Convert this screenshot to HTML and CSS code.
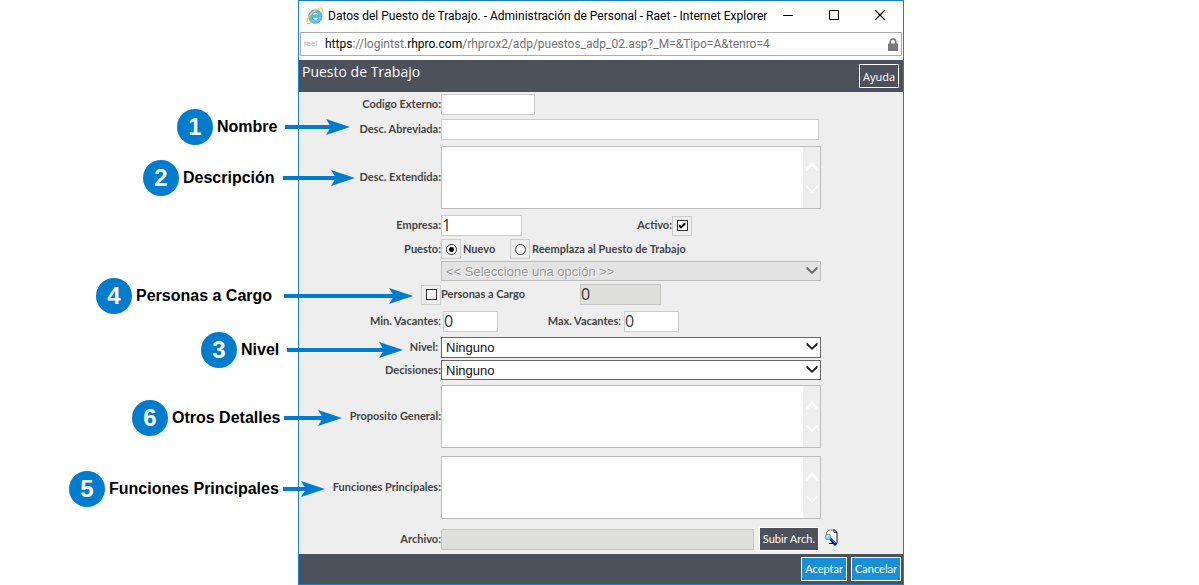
FILE: index.html
```html
<!DOCTYPE html>
<html lang="es">
<head>
<meta charset="utf-8">
<title>Puesto de Trabajo</title>
<link rel="stylesheet" href="styles.css">
</head>
<body>
<svg class="defs" aria-hidden="true">
  <symbol id="head" viewBox="0 0 24 16"><path d="M0 0 24 8 0 16 5 8z" fill="#007ccf"/></symbol>
  <symbol id="down" viewBox="0 0 12 9"><path d="M0.500 1h1L6 5.500 10.500 1h1v2L6 8 0.500 3z" fill="currentColor"/></symbol>
  <symbol id="up" viewBox="0 0 12 9"><path d="M0 9h1l5-5 5 5h1V6L6 0 0 6z" fill="currentColor"/></symbol>
</svg>
<main class="window">
  <header class="titlebar">
    <svg class="ie" viewBox="0 0 18 18" aria-hidden="true">
      <path d="M16 10.300H6.200a3.400 3.400 0 0 0 6.300 1.400h3.200A6.700 6.700 0 1 1 16 10.300zM6.300 8h6.500a3.300 3.300 0 0 0-6.500 0z" fill="#5cc4f2" stroke="#2b94d2" stroke-width=".7"/>
      <path d="M1.500 12.500C.5 15 .6 16.700 2 16.800 3.500 16.900 6 15.500 8 14M12 1.800C14.500.7 16.300.8 16.500 2.200 16.600 3.200 16.200 4.500 15.500 6" fill="none" stroke="#f0b928"/>
      <path d="M1.500 12.500C3.500 7.500 8 3.500 13 1.500" fill="none" stroke="#f6c83c" stroke-width="1.200"/>
    </svg>
    <h1 class="caption">Datos del Puesto de Trabajo. - Administración de Personal - Raet - Internet Explorer</h1>
    <button class="winbtn" aria-label="Minimizar"><svg width="12" height="12"><path d="M1 5.500h10" stroke="#000"/></svg></button>
    <button class="winbtn" aria-label="Maximizar"><svg width="12" height="12"><path d="M1.500 .5h9v9h-9z" fill="none" stroke="#000"/></svg></button>
    <button class="winbtn" aria-label="Cerrar"><svg width="12" height="12"><path d="M1 0l10 10M11 0 1 10" stroke="#000" stroke-width="1.200"/></svg></button>
  </header>
  <div class="address">
    <span class="favicon"><i class="r">r</i><i class="a">a</i><i class="e">e</i><i class="t">t</i></span>
    <span class="url"><b>https</b>://logintst.<b>rhpro.com</b>/rhprox2/adp/puestos_adp_02.asp?_M=&amp;Tipo=A&amp;tenro=4</span>
    <svg class="lock" viewBox="0 0 10 13" aria-hidden="true"><path d="M2.200 6V3.800a2.800 2.800 0 0 1 5.600 0V6" fill="none" stroke="#777" stroke-width="1.500"/><path d="M0 5.500h10V13H0z" fill="#777"/></svg>
  </div>
  <div class="toolbar"><h2 class="heading">Puesto de Trabajo</h2><button class="btn help">Ayuda</button></div>
  <form class="form">
    <div class="row"><label for="cod">Codigo Externo:</label><div class="field"><input id="cod" class="text medium" type="text"></div></div>
    <div class="row gap4"><label for="abr">Desc. Abreviada:</label><div class="field"><input id="abr" class="text long" type="text"></div></div>
    <div class="row gap6"><label for="ext">Desc. Extendida:</label><div class="field area"><textarea id="ext"></textarea><span class="scroll"><svg><use href="#up"/></svg><svg><use href="#down"/></svg></span></div></div>
    <div class="row gap6"><label for="emp">Empresa:</label><div class="field"><input id="emp" class="text short" type="text" value="1"><label class="activo" for="act">Activo:</label><span class="box"><input id="act" type="checkbox" checked></span></div></div>
    <div class="row gap3"><span class="name">Puesto:</span><div class="field"><span class="box"><input id="nue" type="radio" name="p" checked></span><label class="nuevo" for="nue">Nuevo</label><span class="box"><input id="ree" type="radio" name="p"></span><label class="after" for="ree">Reemplaza al Puesto de Trabajo</label></div></div>
    <div class="row gap2"><span></span><div class="field pick off"><select disabled aria-label="Puesto a reemplazar"><option>&lt;&lt; Seleccione una opción &gt;&gt;</option></select><svg><use href="#down"/></svg></div></div>
    <div class="row gap3"><span class="box end"><input id="per" type="checkbox"></span><div class="field"><label class="cargo" for="per">Personas a Cargo</label><input class="text short" type="text" value="0" disabled aria-label="Cantidad de personas"></div></div>
    <div class="row gap6"><label for="min">Min. Vacantes<span class="thin">:</span></label><div class="field inset"><input id="min" class="text tiny" type="text" value="0"><label class="max" for="max">Max. Vacantes<span class="thin">:</span></label><input id="max" class="text tiny" type="text" value="0"></div></div>
    <div class="row gap5"><label class="pulled" for="niv">Nivel:</label><div class="field pick"><select id="niv"><option>Ninguno</option></select><svg><use href="#down"/></svg></div></div>
    <div class="row gap2"><label for="dec">Decisiones:</label><div class="field pick low"><select id="dec"><option>Ninguno</option></select><svg><use href="#down"/></svg></div></div>
    <div class="row gap5"><label for="pro">Proposito General:</label><div class="field area"><textarea id="pro"></textarea><span class="scroll"><svg><use href="#up"/></svg><svg><use href="#down"/></svg></span></div></div>
    <div class="row gap8"><label for="fun">Funciones Principales:</label><div class="field area"><textarea id="fun"></textarea><span class="scroll"><svg><use href="#up"/></svg><svg><use href="#down"/></svg></span></div></div>
    <div class="row gap8"><label for="arc">Archivo:</label><div class="field file"><input id="arc" class="text" type="text" disabled><button type="button" class="btn">Subir Arch.</button></div>
      <button type="button" class="preview" aria-label="Ver archivo"><svg width="15" height="17" viewBox="0 0 15 17"><path d="M3 1h7l3 3v11H3z" fill="#fff"/><path d="M2.500 6V3.500L5 1h5" fill="none" stroke="#777"/><path d="M10 .5v3h3M10 .5l3 3v11H5" fill="none" stroke="#111"/><circle cx="4" cy="8" r="2.800" fill="#6fe0f2" stroke="#7199a5"/><path d="M2.500 7.500l2-1" stroke="#fff"/><path d="M6.500 10l5.500 6" stroke="#0a1d66" stroke-width="3"/><path d="M7 9.500l4.500 5" stroke="#2f9be0"/></svg></button></div>
  </form>
  <footer class="footer"><button class="btn blue">Aceptar</button><button class="btn blue">Cancelar</button></footer>
</main>
<div class="callout c1"><span class="num">1</span><span>Nombre</span><span class="shaft"></span><svg><use href="#head"/></svg></div>
<div class="callout c2"><span class="num">2</span><span>Descripción</span><span class="shaft"></span><svg><use href="#head"/></svg></div>
<div class="callout c4"><span class="num">4</span><span>Personas a Cargo</span><span class="shaft far"></span><svg><use href="#head"/></svg></div>
<div class="callout c3"><span class="num">3</span><span>Nivel</span><span class="shaft"></span><svg><use href="#head"/></svg></div>
<div class="callout c6"><span class="num">6</span><span>Otros Detalles</span><span class="shaft near"></span><svg><use href="#head"/></svg></div>
<div class="callout c5"><span class="num">5</span><span>Funciones Principales</span><span class="shaft near"></span><svg><use href="#head"/></svg></div>
</body>
</html>
```
FILE: styles.css
```css
* { box-sizing: border-box; }
body { margin: 0; background: #fff; position: relative; font-family: "Open Sans", "Noto Sans", sans-serif; }
button, input, select, textarea { font: inherit; margin: 0; }
.defs { position: absolute; width: 0; height: 0; }

.window { margin: 0 295px 0 298px; border: 1px solid #1b7fcf; background: #fff; display: flex; flex-direction: column; }
.titlebar { display: flex; align-items: center; height: 30px; padding-left: 7px; }
.ie { width: 18px; height: 18px; margin-right: 4px; flex: none; }
.caption { flex: 1; min-width: 0; margin: 0; font-size: 12px; font-weight: 400; font-family: Roboto, sans-serif; line-height: 16px; white-space: nowrap; }
.winbtn { width: 46px; height: 28px; flex: none; border: 0; padding: 0; background: none; display: flex; align-items: center; justify-content: center; }
.address { display: flex; align-items: center; height: 24px; margin: 1px 1px 4px; padding: 0 3px; border: 1px solid #acacac; color: #737373; font-size: 12px; font-family: Roboto, sans-serif; }
.favicon { width: 21px; font-size: 8px; line-height: 12px; flex: none; }
.favicon i { font-style: normal; }
.r { color: #e58a9a; } .a { color: #e9a08e; } .e { color: #a9a0cf; } .t { color: #9fd0b8; }
.url { flex: 1; min-width: 0; white-space: nowrap; }
.url b { font-weight: 400; color: #000; }
.lock { width: 10px; height: 13px; flex: none; }
.toolbar { display: flex; justify-content: space-between; height: 32px; padding: 4px 4px 4px 3px; background: #4d515c; color: #fff; }
.heading { margin: 0; font-size: 14px; line-height: 16px; font-weight: 400; }
.btn { height: 24px; padding: 0 3px; border: 1px solid #fff; background: #4d515c; color: #fff; font: 400 11px/22px Lato, sans-serif; white-space: nowrap; flex: none; }
.help { font: 400 11px/24px "Open Sans", sans-serif; }
.blue { background: #1790d8; }

.form { background: #eee; padding: 2px 0 3px; color: #444; font-size: 11px; line-height: 16px; font-family: Lato, sans-serif; font-weight: 700; }
.row { display: grid; grid-template-columns: 142px minmax(0, 1fr) 82px; align-items: center; }
.row label, .name { padding-bottom: 1px; }
.row > label, .name { text-align: right; }
.row > .pulled { padding-right: 3px; }
.gap2 { margin-top: 2px; } .gap3 { margin-top: 3px; } .gap4 { margin-top: 4px; } .gap5 { margin-top: 5px; } .gap6 { margin-top: 6px; } .gap8 { margin-top: 8px; }
.field { display: flex; align-items: center; min-width: 0; }
.inset { padding-left: 2px; }
.thin { font-weight: 400; }
.text { height: 21px; padding: 0 0 2px; border: 1px solid #ccc; border-radius: 0; background: #fff; color: #333; font: 400 16px/17px "Open Sans", sans-serif; }
.text:disabled { background: #dfdfdd; border-color: #c6c6c6; }
.medium { width: 94px; } .long { width: 100%; margin-right: 2px; } .short { width: 81px; } .tiny { width: 55px; }
.activo { width: 150px; text-align: right; }
.nuevo { width: 49px; padding-left: 2px; }
.after { padding-left: 2px; }
.cargo { width: 139px; }
.max { width: 126px; padding-right: 3px; text-align: right; }
.box { width: 20px; height: 20px; border: 1px solid #ccc; display: flex; align-items: center; justify-content: center; flex: none; }
.end { justify-self: end; }
.box input { appearance: none; width: 11px; height: 11px; border: 1px solid #333; background: #fff; }
.box input[type="radio"] { border-radius: 50%; }
.box input[type="radio"]:checked { background: radial-gradient(circle, #000 0 2px, #fff 3px); }
.box input[type="checkbox"]:checked { display: grid; place-items: center; }
.box input[type="checkbox"]:checked::before { content: ""; width: 7px; height: 6px; background: #000; clip-path: polygon(0 40%, 15% 35%, 38% 60%, 85% 0, 100% 10%, 100% 35%, 42% 100%, 30% 100%, 0 65%); }
.area { height: 63px; border: 1px solid #bcbcbc; align-items: stretch; }
.area textarea { flex: 1; min-width: 0; border: 0; resize: none; background: #fff; overflow: hidden; }
.scroll { width: 17px; display: flex; flex-direction: column; align-items: center; justify-content: center; gap: 14px; color: #fff; }
.scroll svg, .pick svg { width: 12px; height: 9px; }
.pick { position: relative; }
.pick select { appearance: none; width: 100%; height: 21px; padding: 0 4px; border: 1px solid #666; border-radius: 0; background: #fff; color: #111; font: 400 13px/19px "Liberation Sans", sans-serif; }
.pick svg { position: absolute; right: 3px; top: 5px; color: #222; pointer-events: none; }
.pick.off select, .pick.low select { height: 20px; }
.pick.off select { border-color: #bcbcbc; background: #e3e3e3; color: #999; opacity: 1; text-shadow: 1px 1px #fff; }
.pick.off svg { color: #666; }
.file .text { flex: 1; min-width: 0; margin-right: 5px; }
.file .btn { margin-right: 2px; }
.preview { width: 15px; height: 17px; margin: 0 0 3px 3px; padding: 0; border: 0; background: none; }
.preview svg { display: block; }
.footer { display: flex; justify-content: flex-end; gap: 4px; height: 30px; padding: 3px 2px; background: #4d515c; }

.callout { position: absolute; display: flex; align-items: center; gap: 4px; height: 36px; font: 700 16px/20px "Liberation Sans", sans-serif; color: #000; white-space: nowrap; pointer-events: none; }
.num { width: 36px; height: 36px; flex: none; border-radius: 50%; background: #007ccf; color: #fff; font-size: 24px; line-height: 36px; text-align: center; }
.shaft { flex: 1; height: 4px; margin: 0 -10px 0 4px; background: #007ccf; }
.near { margin-left: 0; }
.far { margin-left: 8px; }
.callout svg { width: 24px; height: 16px; flex: none; }
.c1 { left: 177px; top: 109px; width: 173px; }
.c2 { left: 143px; top: 160px; width: 212px; }
.c3 { left: 201px; top: 332px; width: 202px; }
.c4 { left: 96px; top: 278px; width: 317px; }
.c5 { left: 69px; top: 471px; width: 256px; }
.c6 { left: 132px; top: 400px; width: 210px; }
```
